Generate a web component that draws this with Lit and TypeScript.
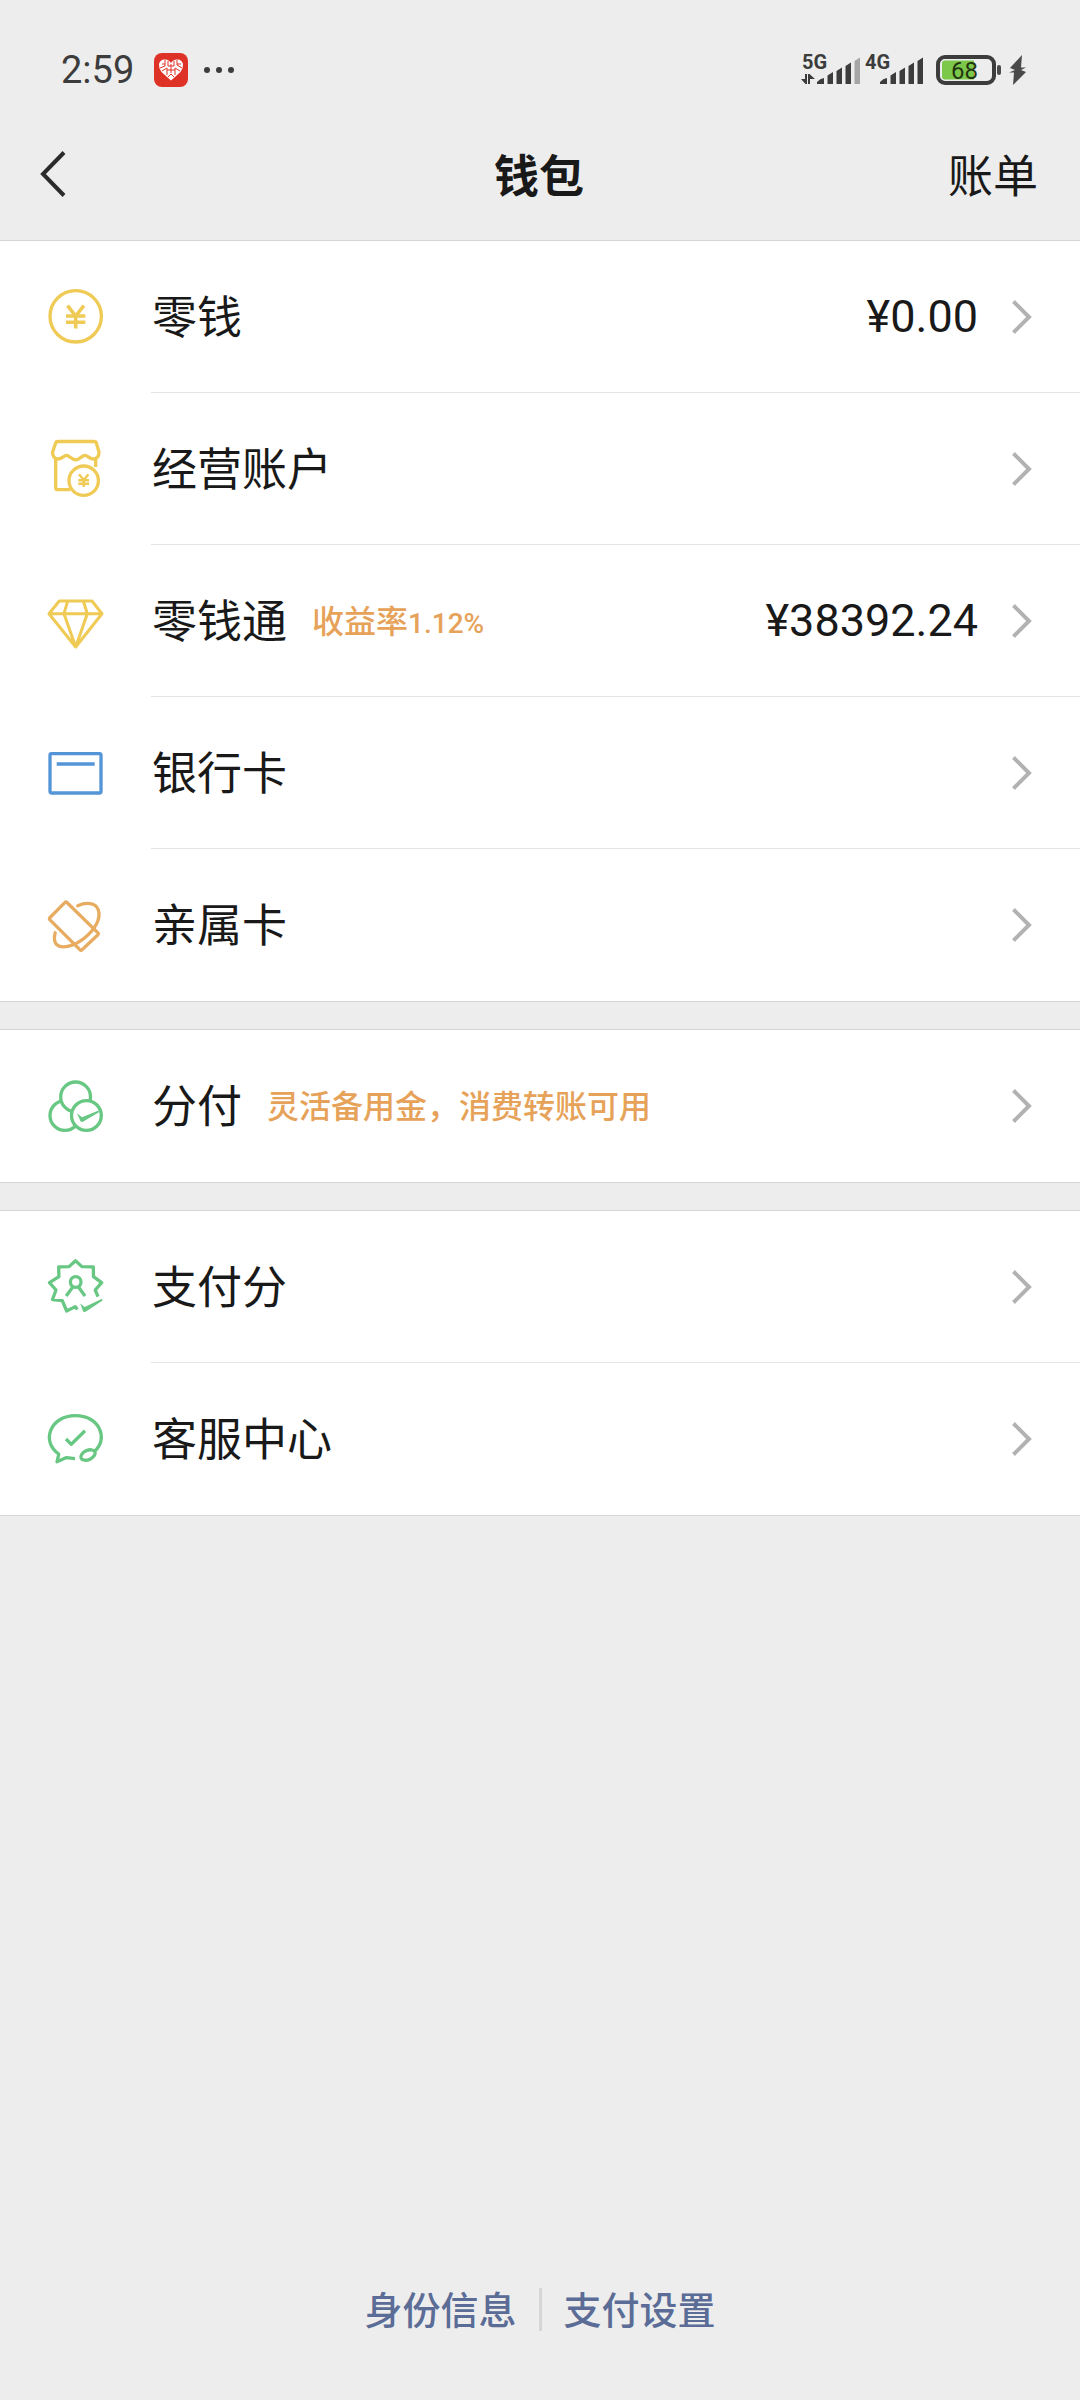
import { LitElement, html, svg, css, nothing, type TemplateResult } from "lit";
import { customElement, property } from "lit/decorators.js";

type IconName = "coin" | "shop" | "gem" | "card" | "kin" | "trio" | "score" | "service";

interface Entry {
  icon: IconName;
  label: string;
  note?: string;
  rate?: string;
  amount?: string;
}

const GROUPS: Entry[][] = [
  [
    { icon: "coin", label: "零钱", amount: "¥0.00" },
    { icon: "shop", label: "经营账户" },
    { icon: "gem", label: "零钱通", note: "收益率", rate: "1.12%", amount: "¥38392.24" },
    { icon: "card", label: "银行卡" },
    { icon: "kin", label: "亲属卡" },
  ],
  [{ icon: "trio", label: "分付", note: "灵活备用金，消费转账可用" }],
  [
    { icon: "score", label: "支付分" },
    { icon: "service", label: "客服中心" },
  ],
];

const GLYPHS: Record<IconName, TemplateResult> = {
  coin: svg`
    <circle cx="29.7" cy="29.3" r="25.7" />
    <path d="M21.5 18.6 29.7 29 37.9 18.6M20 29h19.4M20 35.3h19.4M29.7 29v12.4" stroke-width="3.6" />`,
  shop: svg`
    <path d="M9.7 20v28.7q0 2 2 2H24M49.7 20v8" />
    <path d="M12 2.5H48q2 0 2.500 2L53 13c.3 4.500-2.500 7-5.800 7-4.200 0-5.600-3.600-8.200-3.600-3.200 0-4.800 4.400-9.300 4.400s-6.100-4.400-9.300-4.400c-2.600 0-4 3.600-8.200 3.600-3.300 0-6.100-2.500-5.600-7L9.500 4.500q.5-2 2.500-2Z" />
    <circle cx="37.7" cy="41.700" r="14.700" />
    <path d="m33 35.300 4.700 5.700 4.700-5.700M32.300 41.300h10.800M32.300 44.800h10.800M37.700 41v7" stroke-width="2.400" />`,
  gem: svg`
    <path d="M13.300 10H46l10 12.700L29.700 56 3 22.700ZM3 22.700h53M21.700 10 18 22.700 29.700 56 41.300 22.700 37.300 10" stroke-width="3" />`,
  card: svg`
    <rect x="4" y="10.700" width="51" height="39.300" rx="1.500" />
    <path d="M10.700 21h38" />`,
  kin: svg`
    <path d="M18.800 7.700 4 22.500q-1.200 1.200 0 2.400L33.800 54.600q1.200 1.200 2.400 0L51.700 40q1.200-1.200 0-2.400L21.200 7.700q-1.200-1.200-2.400 0Z" />
    <path d="M31.700 10.800C40 7 49.500 7.600 52.200 14.500 55.500 24 48.500 35 38.500 43 28.500 51 16 54.500 10.500 49.500 8 46.500 8 42 9.200 37.800" stroke-linecap="round" />`,
  trio: svg`
    <circle cx="18.900" cy="39.500" r="14.900" />
    <circle class="cover" cx="29.600" cy="20.900" r="14.900" />
    <circle class="cover" cx="40.400" cy="39.500" r="14.900" />
    <path class="solid" d="M31 37.300 36 41.200 52.600 34.600 53 36.200 36.400 46 34.600 45.600Z" />`,
  score: svg`
    <path d="M52 39.700 49.200 33l6.500-7.300-8.200-6L47.300 9.900 35.900 9.600 29.500 3.800 23.100 9.600 12.700 9.900 12.900 19.700 3.500 25.700 10 33 6.500 42.500 16.300 43.700 20.700 54 29.300 49.600 31.300 52.500" />
    <circle cx="29.700" cy="25" r="5.300" />
    <path d="M20.200 39 27 29.800M39 39 32.300 29.800" />
    <path class="solid" d="M34.200 46.400 38.800 50 56 41.800 56.600 43.400 39.600 54.800 37.400 55Z" />`,
  service: svg`
    <path d="M48.800 42C62.500 30 54 6.700 29.500 6.700 3.500 6.700-5 33 12.800 45L11 52.800 20.500 48.600 29 49.600" />
    <ellipse cx="42" cy="46" rx="7.600" ry="4.600" transform="rotate(-25 42 46)" />
    <path d="M20 30 25.300 35.300 39 21.800" />`,
};

@customElement("wallet-icon")
export class WalletIcon extends LitElement {
  @property() name: IconName = "coin";

  static styles = css`
    :host { display: block; flex: none; }
    .glyph { display: block; width: 60px; height: 60px; overflow: visible; fill: none; stroke: currentColor; stroke-width: 3.3; stroke-linejoin: round; }
    .cover { fill: #fff; }
    .solid { fill: currentColor; stroke: none; }
    .coin, .shop, .gem { color: #efca54; }
    .card { color: #5495d8; }
    .kin { color: #e7ac60; }
    .trio, .score, .service { color: #67c783; }
  `;

  render() {
    return html`<svg class="glyph ${this.name}" viewBox="0 0 60 60" aria-hidden="true">${GLYPHS[this.name]}</svg>`;
  }
}

@customElement("wallet-row")
export class WalletRow extends LitElement {
  @property({ attribute: false }) entry!: Entry;

  static styles = css`
    :host { display: block; }
    .row { display: flex; align-items: stretch; padding-left: 46px; gap: 45px; color: #191919; text-decoration: none; }
    .icon { align-self: center; }
    .body { flex: 1; min-width: 0; display: flex; align-items: center; height: 151px; padding-right: 48px; border-bottom: 1px solid var(--row-line, #e4e4e4); }
    .label { font-size: 45px; line-height: 60px; padding: 0 0 4px 1px; }
    .note { margin-left: 25px; padding-bottom: 4px; font-size: 32px; line-height: 44px; font-weight: 500; color: #e6a259; }
    .rate { font-family: Roboto, sans-serif; font-size: 28px; line-height: 28px; }
    .amount { margin-left: auto; font-family: Roboto, "Noto Sans CJK SC", sans-serif; font-size: 45px; line-height: 60px; }
    .chevron { display: block; flex: none; width: 20px; height: 36px; margin-left: auto; fill: none; stroke: #b2b2b2; stroke-width: 4; }
    .amount + .chevron { margin-left: 34px; }
  `;

  render() {
    const { icon, label, note, rate, amount } = this.entry;
    return html`
      <a class="row" href="#">
        <wallet-icon class="icon" .name=${icon}></wallet-icon>
        <span class="body">
          <span class="label">${label}</span>
          ${note ? html`<span class="note">${note}${rate ? html`<span class="rate">${rate}</span>` : nothing}</span>` : nothing}
          ${amount ? html`<span class="amount">${amount}</span>` : nothing}
          <svg class="chevron" viewBox="0 0 20 36" aria-hidden="true"><path d="M1.500 2.500 17 18 1.500 33.500" /></svg>
        </span>
      </a>
    `;
  }
}

@customElement("status-bar")
export class StatusBar extends LitElement {
  static styles = css`
    :host { display: block; color: #3c3c3c; font-family: Roboto, sans-serif; }
    .bar { display: flex; align-items: center; justify-content: space-between; padding: 50px 54px 18px 61px; height: 40px; }
    .side { display: flex; align-items: center; }
    .time { font-size: 38px; line-height: 40px; margin-right: 20px; }
    .app { width: 34px; height: 34px; margin-right: 16px; }
    .dots { width: 30px; height: 6px; fill: currentColor; }
    .network { width: 122px; height: 40px; fill: currentColor; margin-right: 13px; overflow: visible; }
    .generation { font: 700 20px Roboto, sans-serif; }
    .weak { fill: #a6a6a6; }
    .battery { width: 65px; height: 30px; margin-right: 8px; }
    .shell { fill: none; stroke: #3c3c3c; stroke-width: 4; }
    .charge { fill: #7cc84b; }
    .level { font: 400 24px Roboto, sans-serif; fill: #23350f; }
    .cap, .bolt { fill: #4a4a4a; }
    .bolt { width: 17px; height: 30px; }
    svg { display: block; }
  `;

  render() {
    return html`
      <div class="bar">
        <div class="side">
          <span class="time">2:59</span>
          <svg class="app" viewBox="0 0 34 34" aria-hidden="true">
            <rect width="34" height="34" rx="8" fill="#df3227" />
            <path d="M17 27.500 7.500 19Q4.500 15 5 11 6.500 6 11 6.500 15 6.500 17 10 19 6.500 23 6.500 27.500 6 29 11 29.500 15 26.500 19Z" fill="#fff" />
            <path d="M11 7v6l-5 2M14 8v5h6V8M23 7v5l5 3M8 18l5-3v7M13 17h8M17 14v6M21 22v-7l5 3M14 24l3-3 3 3M8 11h3M23 11h4M17 11v3" fill="none" stroke="#df3227" stroke-width="1" />
          </svg>
          <svg class="dots" viewBox="0 0 30 6" aria-hidden="true">
            <circle cx="3" cy="3" r="3" /><circle cx="15" cy="3" r="3" /><circle cx="27" cy="3" r="3" />
          </svg>
        </div>
        <div class="side">
          <svg class="network" viewBox="0 -3 122 40" aria-label="5G 4G">
            <text class="generation" x="1" y="16">5G</text>
            <path d="M4 21h2v10H4.500L0 26h4ZM9 31h-2V21h1.500L14 26H9Z" />
            <path d="M16 29q3-3.500 7-4v6h-7ZM26.500 22.500l5.500-3.500v12h-5.500ZM35.500 18l5.500-3.500v16.500h-5.500ZM44.500 13l5.500-3.500v21.500h-5.500Z" />
            <path class="weak" d="M53.500 8l5.500-3.500v26.500h-5.500Z" />
            <text class="generation" x="64" y="16">4G</text>
            <path d="M79 29q3-3.500 7-4v6h-7ZM89.500 22.500l5.500-3.500v12h-5.500ZM98.500 18l5.500-3.500v16.500h-5.500ZM107.500 13l5.500-3.500v21.500h-5.500ZM116.500 8l5.500-3.500v26.500h-5.500Z" />
          </svg>
          <svg class="battery" viewBox="0 0 65 30" aria-label="68%">
            <rect class="shell" x="2" y="2" width="56" height="26" rx="7" />
            <path class="charge" d="M9 5.500H38V24.500H9Q6 24.500 6 21.500V8.500Q6 5.500 9 5.500Z" />
            <rect class="cap" x="61" y="10" width="4" height="10" rx="2" />
            <text class="level" x="15" y="23.500">68</text>
          </svg>
          <svg class="bolt" viewBox="0 0 17 30" aria-hidden="true"><path d="M13 0 1 13l5 2-6 2.500h5L4 30 17 17l-5-2 5-2.500h-5Z" /></svg>
        </div>
      </div>
    `;
  }
}

@customElement("app-root")
export class AppRoot extends LitElement {
  static styles = css`
    :host { display: flex; flex-direction: column; min-height: 100vh; background: #ededed; color: #191919; font-family: "Noto Sans CJK SC", sans-serif; }
    .nav { display: grid; grid-template-columns: 1fr auto 1fr; align-items: center; height: 132px; padding: 0 42px 0 40px; }
    .nav-button { appearance: none; border: 0; margin: 0; padding: 0; background: none; color: inherit; font: inherit; font-size: 45px; line-height: 60px; }
    .back { justify-self: start; }
    .back-glyph { display: block; width: 26px; height: 46px; fill: none; stroke: #2b2b2b; stroke-width: 4; }
    .title { margin: 0; font-size: 45px; line-height: 60px; font-weight: 700; }
    .bills { justify-self: end; }
    .groups { display: flex; flex-direction: column; gap: 27px; }
    .group { list-style: none; margin: 0; padding: 0; background: #fff; border: solid #d5d5d5; border-width: 1px 0; }
    .item:last-child { --row-line: transparent; }
    .footer { display: flex; justify-content: center; align-items: center; gap: 22px; margin-top: auto; padding: 48px 0 67px; }
    .footer-link { padding-bottom: 4px; color: #5b6c96; font-size: 38px; line-height: 43px; font-weight: 500; text-decoration: none; }
    .rule { width: 3px; height: 43px; background: #d6d6d6; }
  `;

  render() {
    return html`
      <status-bar></status-bar>
      <header class="nav">
        <button class="nav-button back" type="button" aria-label="返回">
          <svg class="back-glyph" viewBox="0 0 26 46" aria-hidden="true"><path d="M24 1.500 3 23 24 44.500" /></svg>
        </button>
        <h1 class="title">钱包</h1>
        <button class="nav-button bills" type="button">账单</button>
      </header>
      <main class="groups">
        ${GROUPS.map((group) => html`
          <ul class="group">
            ${group.map((entry) => html`<li class="item"><wallet-row .entry=${entry}></wallet-row></li>`)}
          </ul>
        `)}
      </main>
      <footer class="footer">
        <a class="footer-link" href="#">身份信息</a>
        <span class="rule"></span>
        <a class="footer-link" href="#">支付设置</a>
      </footer>
    `;
  }
}
